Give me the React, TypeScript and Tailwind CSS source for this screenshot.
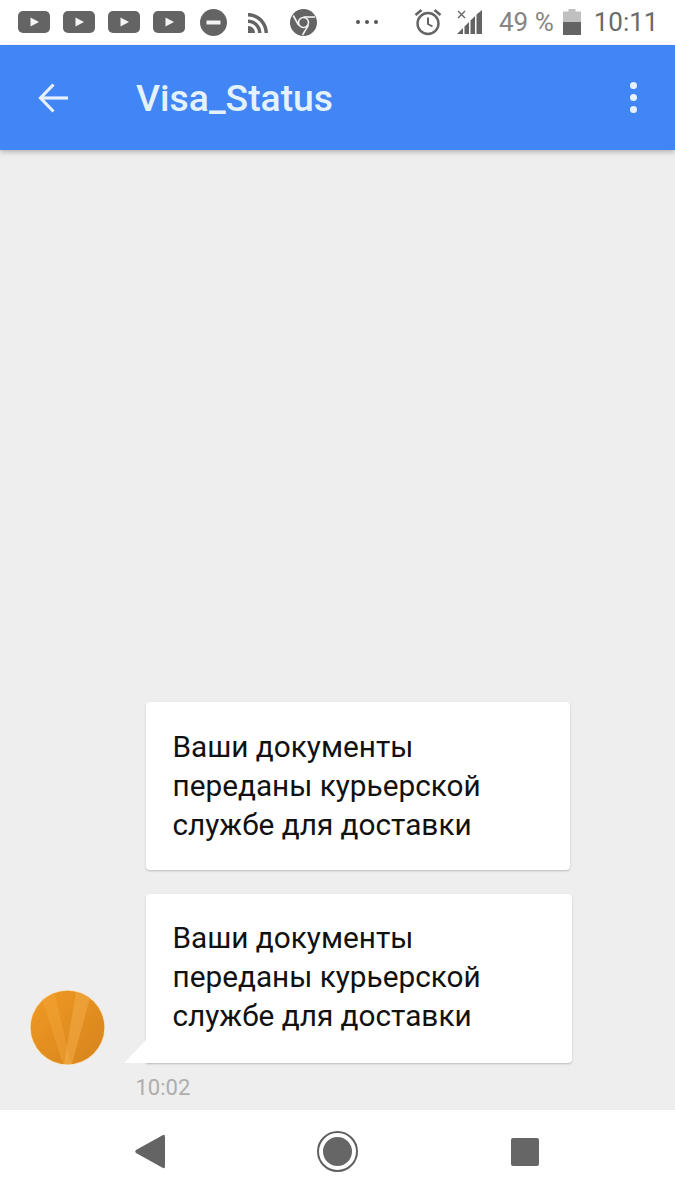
const STATUS_GREY = "#646464";

function YouTubeIcon() {
  return (
    <svg width="32" height="22" viewBox="0 0 32 22" className="shrink-0">
      <rect x="0" y="0" width="32" height="22" rx="5" fill={STATUS_GREY} />
      <path d="M12.5 6.5 L21 11 L12.5 15.5 Z" fill="#f4f4f4" />
    </svg>
  );
}

function Message() {
  return (
    <p className="text-[29.75px] leading-[39px] text-[#111111]">
      Ваши документы
      <br />
      переданы курьерской
      <br />
      службе для доставки
    </p>
  );
}

export default function App() {
  return (
    <div className="flex h-[1200px] w-[675px] flex-col overflow-hidden bg-[#eeeeee] font-['Roboto',sans-serif]">
      {/* Status bar */}
      <div className="flex h-[45px] shrink-0 items-center bg-white pl-[18px] pb-[1px]">
        <div className="flex items-center gap-[13px]">
          <YouTubeIcon />
          <YouTubeIcon />
          <YouTubeIcon />
          <YouTubeIcon />
        </div>
        <svg width="27" height="27" viewBox="0 0 27 27" className="ml-[15px] shrink-0">
          <circle cx="13.5" cy="13.5" r="13.5" fill={STATUS_GREY} />
          <rect x="6.5" y="11.5" width="14" height="4" fill="#f4f4f4" />
        </svg>
        <svg width="20" height="20" viewBox="0 0 20 20" className="ml-[21px] mt-[2px] shrink-0">
          <path d="M0 0 C11 0 20 9 20 20 H16.5 C16.5 11 9 3.5 0 3.5 Z" fill={STATUS_GREY} />
          <path d="M0 6.5 C7.5 6.5 13.5 12.5 13.5 20 H10 C10 14.5 5.5 10 0 10 Z" fill={STATUS_GREY} />
          <path d="M0 13 C4 13 7 16 7 20 H0 Z" fill={STATUS_GREY} />
        </svg>
        <svg width="27" height="27" viewBox="0 0 27 27" className="ml-[22px] shrink-0">
          <circle cx="13.5" cy="13.5" r="13.5" fill={STATUS_GREY} />
          <path d="M13.5 8 H25" stroke="#f4f4f4" strokeWidth="1.6" />
          <path d="M8.7 16.3 L3.2 6.5" stroke="#f4f4f4" strokeWidth="1.6" />
          <path d="M18.3 16.3 L12.5 26" stroke="#f4f4f4" strokeWidth="1.6" />
          <circle cx="13.5" cy="13.5" r="5" fill={STATUS_GREY} stroke="#f4f4f4" strokeWidth="1.6" />
        </svg>
        <div className="ml-[39px] flex shrink-0 items-center gap-[5px]">
          <span className="h-[4px] w-[4px] rounded-full bg-[#555555]" />
          <span className="h-[4px] w-[4px] rounded-full bg-[#555555]" />
          <span className="h-[4px] w-[4px] rounded-full bg-[#555555]" />
        </div>
        <svg width="28" height="28" viewBox="0 0 28 28" className="ml-[36px] shrink-0" fill="none" stroke={STATUS_GREY}>
          <circle cx="14" cy="15.5" r="10.5" strokeWidth="2.4" />
          <path d="M14 9.5 V16 L18.5 18.5" strokeWidth="2" />
          <path d="M1.5 7 L7.5 2" strokeWidth="2.6" />
          <path d="M26.5 7 L20.5 2" strokeWidth="2.6" />
        </svg>
        <svg width="26" height="26" viewBox="0 0 26 26" className="ml-[15px] shrink-0">
          <path d="M1 2 L8 9 M8 2 L1 9" stroke={STATUS_GREY} strokeWidth="1.4" />
          <path d="M0 25 L6 19 V25 Z" fill={STATUS_GREY} />
          <path d="M7.5 25 V17.5 L12 13 V25 Z" fill={STATUS_GREY} />
          <path d="M13.5 25 V11.5 L18 7 V25 Z" fill={STATUS_GREY} />
          <path d="M19.5 25 V5.5 L25 1 V25 Z" fill={STATUS_GREY} />
        </svg>
        <span className="ml-[16px] whitespace-nowrap text-[26px] leading-none text-[#858585]">49 %</span>
        <svg width="18" height="26" viewBox="0 0 18 26" className="ml-[9px] shrink-0">
          <path d="M5.5 0 H12.5 V2.5 H18 V13 H0 V2.5 H5.5 Z" fill="#c0c0c0" />
          <rect x="0" y="13" width="18" height="13" fill={STATUS_GREY} />
        </svg>
        <span className="ml-[13px] text-[26px] leading-none text-[#6a6a6a]">10:11</span>
      </div>

      {/* App bar */}
      <header className="z-10 flex h-[105px] shrink-0 items-center bg-[#4285f4] pl-[38px] pr-[38px] shadow-[0_2px_5px_rgba(0,0,0,0.25)]">
        <svg width="30" height="30" viewBox="0 0 30 30" className="shrink-0" fill="none" stroke="#e6f1fd" strokeWidth="3.2">
          <path d="M30 15 H3" />
          <path d="M15.5 1.5 L2.5 15 L15.5 28.5" />
        </svg>
        <h1 className="ml-[68px] mt-[3px] flex-1 text-[37.3px] font-medium leading-none text-[#e3f2fd]">Visa_Status</h1>
        <div className="flex flex-col gap-[5px]">
          <span className="h-[7px] w-[7px] rounded-full bg-[#e6f1fd]" />
          <span className="h-[7px] w-[7px] rounded-full bg-[#e6f1fd]" />
          <span className="h-[7px] w-[7px] rounded-full bg-[#e6f1fd]" />
        </div>
      </header>

      {/* Messages */}
      <main className="flex flex-1 flex-col justify-end pb-[10px]">
        <div className="ml-[146px] w-[424px] rounded-[4px] bg-white pb-[26px] pl-[26.5px] pr-[27px] pt-[25px] shadow-[0_1px_2px_rgba(0,0,0,0.22)]">
          <Message />
        </div>
        <div className="mt-[24px] flex items-end pl-[30px]">
          <svg width="75" height="75" viewBox="0 0 75 75" className="-mb-[2px] shrink-0">
            <defs>
              <linearGradient id="avatarBg" x1="0" y1="0" x2="1" y2="1">
                <stop offset="0" stopColor="#f09a24" />
                <stop offset="1" stopColor="#d5831c" />
              </linearGradient>
            </defs>
            <circle cx="37.5" cy="37.5" r="37.5" fill="#fbd9a6" />
            <circle cx="37.5" cy="37.5" r="36.8" fill="url(#avatarBg)" />
            <path d="M12 9 L25 4 L41 74 L33 74 Z" fill="#f4a93f" opacity="0.4" />
            <path d="M46 2 L60 8 L42 74 L34 74 Z" fill="#f6b04c" opacity="0.5" />
          </svg>
          <div className="relative ml-[41px] w-[426px] rounded-[4px] rounded-bl-none bg-white pb-[28px] pl-[26.5px] pr-[27px] pt-[24px] shadow-[0_1px_2px_rgba(0,0,0,0.22)]">
            <Message />
            <svg width="22" height="23" viewBox="0 0 22 23" className="absolute bottom-0 left-[-22px]">
              <path d="M0 23 L22 0 V23 Z" fill="#ffffff" />
            </svg>
          </div>
        </div>
        <div className="ml-[135.5px] mt-[13px] text-[22px] leading-[24px] text-[#adadad]">10:02</div>
      </main>

      {/* Navigation bar */}
      <nav className="flex h-[90px] shrink-0 items-center bg-white pb-[7px] pl-[135px]">
        <svg width="30" height="35" viewBox="0 0 30 35" className="shrink-0">
          <path d="M28 1 Q30 0 30 3 V32 Q30 35 28 34 L1 19 Q-0.5 17.5 1 16 Z" fill={STATUS_GREY} />
        </svg>
        <div className="ml-[152px] flex h-[41px] w-[41px] shrink-0 items-center justify-center rounded-full border-[2px] border-[#5f5f5f]">
          <span className="h-[29px] w-[29px] rounded-full bg-[#666666]" />
        </div>
        <span className="ml-[153px] h-[28px] w-[28px] shrink-0 rounded-[2px] bg-[#666666]" />
      </nav>
    </div>
  );
}
